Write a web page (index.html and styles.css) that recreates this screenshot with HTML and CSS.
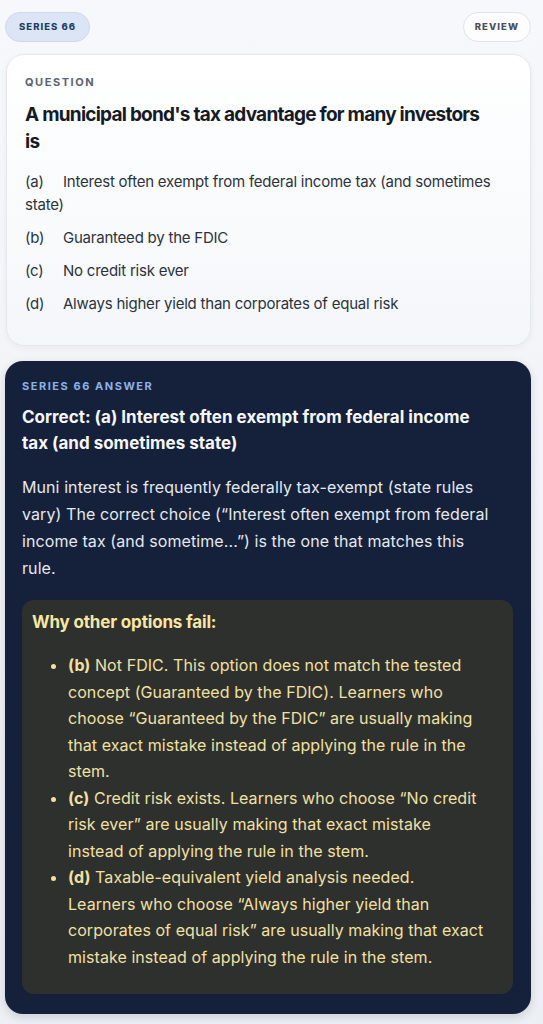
FILE: index.html
```html
<!DOCTYPE html>
<html lang="en">
<head>
    <meta charset="UTF-8">
    <meta name="viewport" content="width=device-width, initial-scale=1"/>
    <title>Series 66</title>
    <link rel="stylesheet" href="styles.css">
</head>
<body>

    <div class="wrap">
        <header class="top">
            <span class="pill pill-series">SERIES 66</span>
            <span class="pill pill-review">REVIEW</span>
        </header>

        <section class="card question">
            <div class="label">QUESTION</div>
            <h1 class="q-title">A municipal bond's tax advantage for many investors is</h1>
            <ul class="opts">
                <li><span class="key">(a)</span>Interest often exempt from federal income tax (and sometimes state)</li>
                <li><span class="key">(b)</span>Guaranteed by the FDIC</li>
                <li><span class="key">(c)</span>No credit risk ever</li>
                <li><span class="key">(d)</span>Always higher yield than corporates of equal risk</li>
            </ul>
        </section>

        <section class="card answer">
            <div class="label label-blue">SERIES 66 ANSWER</div>
            <h2 class="a-title">Correct: (a) Interest often exempt from federal income tax (and sometimes state)</h2>
            <p class="explain">Muni interest is frequently federally tax-exempt (state rules vary) The correct choice (“Interest often exempt from federal income tax (and sometime...”) is the one that matches this rule.</p>

            <div class="why">
                <div class="why-title">Why other options fail:</div>
                <ul class="why-list">
                    <li><b>(b)</b> Not FDIC. This option does not match the tested concept (Guaranteed by the FDIC). Learners who choose “Guaranteed by the FDIC” are usually making that exact mistake instead of applying the rule in the stem.</li>
                    <li><b>(c)</b> Credit risk exists. Learners who choose “No credit risk ever” are usually making that exact mistake instead of applying the rule in the stem.</li>
                    <li><b>(d)</b> Taxable-equivalent yield analysis needed. Learners who choose “Always higher yield than corporates of equal risk” are usually making that exact mistake instead of applying the rule in the stem.</li>
                </ul>
            </div>
        </section>
    </div>

</body>
</html>
```

FILE: styles.css
```css
html,body,div,ul,li,h1,h2,p{
    margin: 0;
    padding: 0;
}

ul,li{
    list-style: none;
}

body{
    background: linear-gradient(#f6f8fb, #eceff4);
    font-family: Inter, "Noto Sans", sans-serif;
    color: #1b2230;
    min-height: 1024px;
}

.wrap{
    padding: 12px 12px 0 5px;
}

.top{
    display: flex;
    justify-content: space-between;
    align-items: center;
    margin-bottom: 12px;
}

.pill{
    display: inline-block;
    height: 28px;
    line-height: 28px;
    padding: 0 13px;
    border-radius: 15px;
    font-size: 9.5px;
    font-weight: 800;
    letter-spacing: 0.11em;
}

.pill-series{
    background-color: #dbe5f5;
    border: 1px solid #cdd9ee;
    color: #223d66;
}

.pill-review{
    background-color: #fdfdfe;
    border: 1px solid #dfe3ea;
    color: #4b5059;
    padding: 0 11px;
}

.card{
    border-radius: 18px;
    padding: 18px 18px;
}

.question{
    margin-left: 1px;
    background: linear-gradient(#ffffff, #f4f7fa);
    border: 1px solid #e3e7ee;
    box-shadow: 0 2px 6px rgba(30, 40, 60, 0.05);
    padding: 20px 18px 30px;
}

.label{
    font-size: 11px;
    font-weight: 700;
    letter-spacing: 0.14em;
    color: #5d6470;
    line-height: 14px;
}

.label-blue{
    color: #8db1e6;
}

.q-title{
    max-width: 470px;
    margin-top: 12px;
    font-size: 19px;
    line-height: 27px;
    font-weight: 700;
    letter-spacing: -0.04em;
    color: #151b26;
}

.opts{
    margin-top: 15px;
}

.opts li{
    font-size: 15px;
    line-height: 23px;
    color: #2c3340;
    margin-bottom: 10px;
    letter-spacing: -0.015em;
}

.opts li:last-child{
    margin-bottom: 0;
}

.key{
    display: inline-block;
    width: 38px;
}

.answer{
    margin-top: 15px;
    background-color: #15213a;
    box-shadow: 0 3px 10px rgba(10, 20, 40, 0.15);
    padding: 18px 18px 20px 17px;
}

.a-title,
.explain{
    padding-right: 21px;
}

.a-title{
    margin-top: 11px;
    font-size: 17px;
    line-height: 26px;
    font-weight: 700;
    color: #f5f7fb;
    letter-spacing: 0;
}

.explain{
    margin-top: 18px;
    font-size: 16px;
    line-height: 27px;
    color: #e4e8ef;
    letter-spacing: 0.005em;
}

.why{
    margin-top: 18px;
    background-color: #2e302e;
    border-radius: 12px;
    padding: 10px 27px 24px 10px;
}

.why-title{
    font-size: 17px;
    line-height: 24px;
    font-weight: 700;
    color: #f8e6a2;
    letter-spacing: -0.01em;
}

.why-list{
    margin-top: 18px;
    padding-left: 36px;
}

.why-list li{
    list-style: disc;
    font-size: 16px;
    line-height: 26.5px;
    color: #f1e0a3;
    letter-spacing: 0.004em;
}

.why-list li::marker{
    color: #f1e0a3;
}
```
